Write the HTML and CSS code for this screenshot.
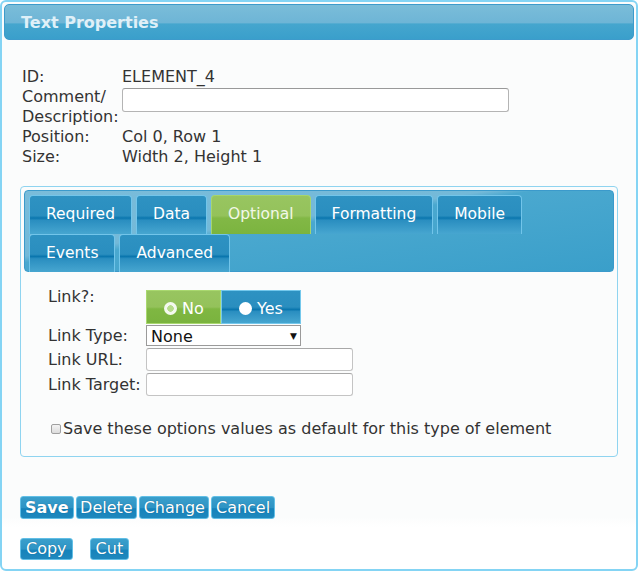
FILE: index.html
```html
<!DOCTYPE html>
<html>
<head>
<meta charset="utf-8">
<link rel="stylesheet" href="styles.css">
</head>
<body>
<div class="panel">
  <div class="titlebar">Text Properties</div>
  <div class="info">
    <div class="info-label">ID:</div><div class="info-value">ELEMENT_4</div>
    <div class="info-label">Comment/<br>Description:</div><div class="info-value"><input class="comment" type="text"></div>
    <div class="info-label">Position:</div><div class="info-value">Col 0, Row 1</div>
    <div class="info-label">Size:</div><div class="info-value">Width 2, Height 1</div>
  </div>
  <div class="frame">
    <div class="tabbar">
      <div class="tabrow">
        <div class="tab">Required</div>
        <div class="tab">Data</div>
        <div class="tab active">Optional</div>
        <div class="tab">Formatting</div>
        <div class="tab">Mobile</div>
      </div>
      <div class="tabrow">
        <div class="tab">Events</div>
        <div class="tab">Advanced</div>
      </div>
    </div>
    <div class="form">
      <div class="row row-link">
        <div class="flabel">Link?:</div>
        <div class="toggle">
          <div class="opt opt-no"><span class="radio on"></span>No</div>
          <div class="opt opt-yes"><span class="radio"></span>Yes</div>
        </div>
      </div>
      <div class="row row-type">
        <div class="flabel">Link Type:</div>
        <div class="select"><span>None</span><span class="arrow">&#9660;</span></div>
      </div>
      <div class="row row-url">
        <div class="flabel">Link URL:</div>
        <input class="field" type="text">
      </div>
      <div class="row row-target">
        <div class="flabel">Link Target:</div>
        <input class="field" type="text">
      </div>
      <div class="savedefault"><span class="cbox"></span>Save these options values as default for this type of element</div>
    </div>
  </div>
  <div class="buttons">
    <span class="btn bold">Save</span><span class="btn">Delete</span><span class="btn">Change</span><span class="btn">Cancel</span>
  </div>
  <div class="buttons buttons2">
    <span class="btn">Copy</span><span class="btn">Cut</span>
  </div>
</div>
</body>
</html>
```

FILE: styles.css
```css
* { box-sizing: border-box; }
html, body { margin: 0; padding: 0; background: #ffffff; }
body { font-family: "DejaVu Sans", Verdana, sans-serif; font-size: 16px; color: #333333; }

.panel {
  width: 638px;
  height: 571px;
  border: 2px solid #84d4f4;
  border-radius: 6px;
  padding: 2px;
  background: linear-gradient(#fbfcfc 0, #fbfcfc 515px, #ffffff 525px);
}

.titlebar {
  height: 36px;
  border: 1px solid #3d9bcb;
  border-radius: 5px;
  background: linear-gradient(#7abdd9 0%, #6eb5d6 52%, #45a6ce 56%, #3a9fcb 100%);
  color: #dff0f8;
  font-weight: bold;
  font-size: 16px;
  line-height: 35px;
  padding-left: 16px;
}

.info {
  display: grid;
  grid-template-columns: 100px 1fr;
  grid-auto-rows: minmax(20px, auto);
  line-height: 20px;
  margin: 27px 0 0 18px;
}
.comment {
  display: block;
  width: 387px;
  height: 24px;
  margin-top: 1px;
  border: 1px solid #b4b4b4;
  border-top-color: #999;
  border-radius: 3px;
  background: #fff;
}

.frame {
  margin: 19px 0 0 16px;
  width: 598px;
  height: 271px;
  border: 1px solid #8fd4f0;
  border-radius: 4px;
  padding: 3px;
  background: #fbfcfc;
}

.tabbar {
  height: 82px;
  border: 1px solid #3b9acb;
  border-radius: 4px;
  padding: 4px 0 0 4px;
  background: linear-gradient(172deg, #7abcda 0%, #74b9d8 40%, #4aa8cf 44%, #3a9fca 100%);
}
.tabrow { display: flex; gap: 4px; height: 39px; }
.tabrow + .tabrow { height: 38px; }
.tab {
  border: 1px solid #72c5ea;
  border-bottom: none;
  border-radius: 4px 4px 0 0;
  padding: 0 16px;
  color: #ffffff;
  font-size: 15.5px;
  line-height: 37px;
  background: linear-gradient(#2e92c2 0%, #2a8ebf 52%, #0a76ae 58%, #2a8ec0 64%, #47a6d0 100%);
}
.tab.active {
  border-color: #a6d56c;
  color: #f2f8e8;
  background: linear-gradient(#98c560 0%, #94c25b 52%, #82b846 58%, #7bb43f 100%);
}

.form { padding: 18px 0 0 24px; }
.row { display: flex; }
.flabel { width: 98px; line-height: 20px; white-space: nowrap; }
.row-link { height: 34px; }
.row-link .flabel { margin-top: -3px; }
.toggle { display: flex; height: 34px; }
.opt {
  display: flex;
  align-items: center;
  color: #fff;
  font-size: 16px;
  height: 34px;
  padding-top: 2px;
}
.opt-no {
  width: 75px;
  padding-left: 17px;
  border: 1px solid #a9d86f;
  background: linear-gradient(#98c560 0%, #94c25b 50%, #7fb742 56%, #7ab33e 100%);
}
.opt-yes {
  width: 80px;
  padding-left: 17px;
  border: 1px solid #74c8ec;
  background: linear-gradient(#2e92c2 0%, #2a8ebf 50%, #0a76ae 58%, #2a8ec0 64%, #47a6d0 100%);
}
.radio {
  display: inline-block;
  width: 13px;
  height: 13px;
  border-radius: 50%;
  background: #ffffff;
  margin-right: 5px;
}
.radio.on {
  background: radial-gradient(circle, #b6dc8a 0 3px, #f4f9ee 3.5px);
}

.row-type { height: 22px; margin-top: 1px; }
.row-type .flabel { line-height: 22px; }
.select {
  width: 155px;
  height: 21px;
  border: 1px solid #9a9a9a;
  background: #fff;
  display: flex;
  justify-content: space-between;
  align-items: center;
  padding: 1px 3px 0 4px;
  color: #111;
  font-size: 16px;
}
.select .arrow { font-size: 9px; color: #111; }

.row-url, .row-target { height: 25px; align-items: center; }
.field {
  width: 207px;
  height: 23px;
  border: 1px solid #c4c4c4;
  border-top-color: #a8a8a8;
  border-radius: 3px;
  background: #fff;
  margin: 0;
}

.savedefault {
  margin-top: 22px;
  margin-left: 3px;
  display: flex;
  align-items: center;
  line-height: 20px;
  white-space: nowrap;
}
.cbox {
  display: inline-block;
  width: 10px;
  height: 10px;
  border: 1px solid #a0a0a0;
  border-radius: 2px;
  background: linear-gradient(#f4f4f4, #dcdcdc);
  margin-right: 2px;
}

.buttons { display: flex; gap: 2px; margin: 39px 0 0 16px; }
.buttons2 { margin-top: 19px; gap: 17px; }
.btn {
  display: inline-block;
  height: 23px;
  line-height: 21px;
  padding: 0 3.5px;
  border: 1px solid #62bfe6;
  border-radius: 3px;
  color: #fff;
  font-size: 16px;
  text-shadow: 0 0 1px #0b5e8a;
  background: linear-gradient(#3a9fcc 0%, #2f94c4 50%, #1583bb 56%, #1f88bd 100%);
}
.btn.bold { font-weight: bold; padding: 0 4px; }
.buttons2 .btn { height: 22px; line-height: 20px; padding: 0 5px; }
```
